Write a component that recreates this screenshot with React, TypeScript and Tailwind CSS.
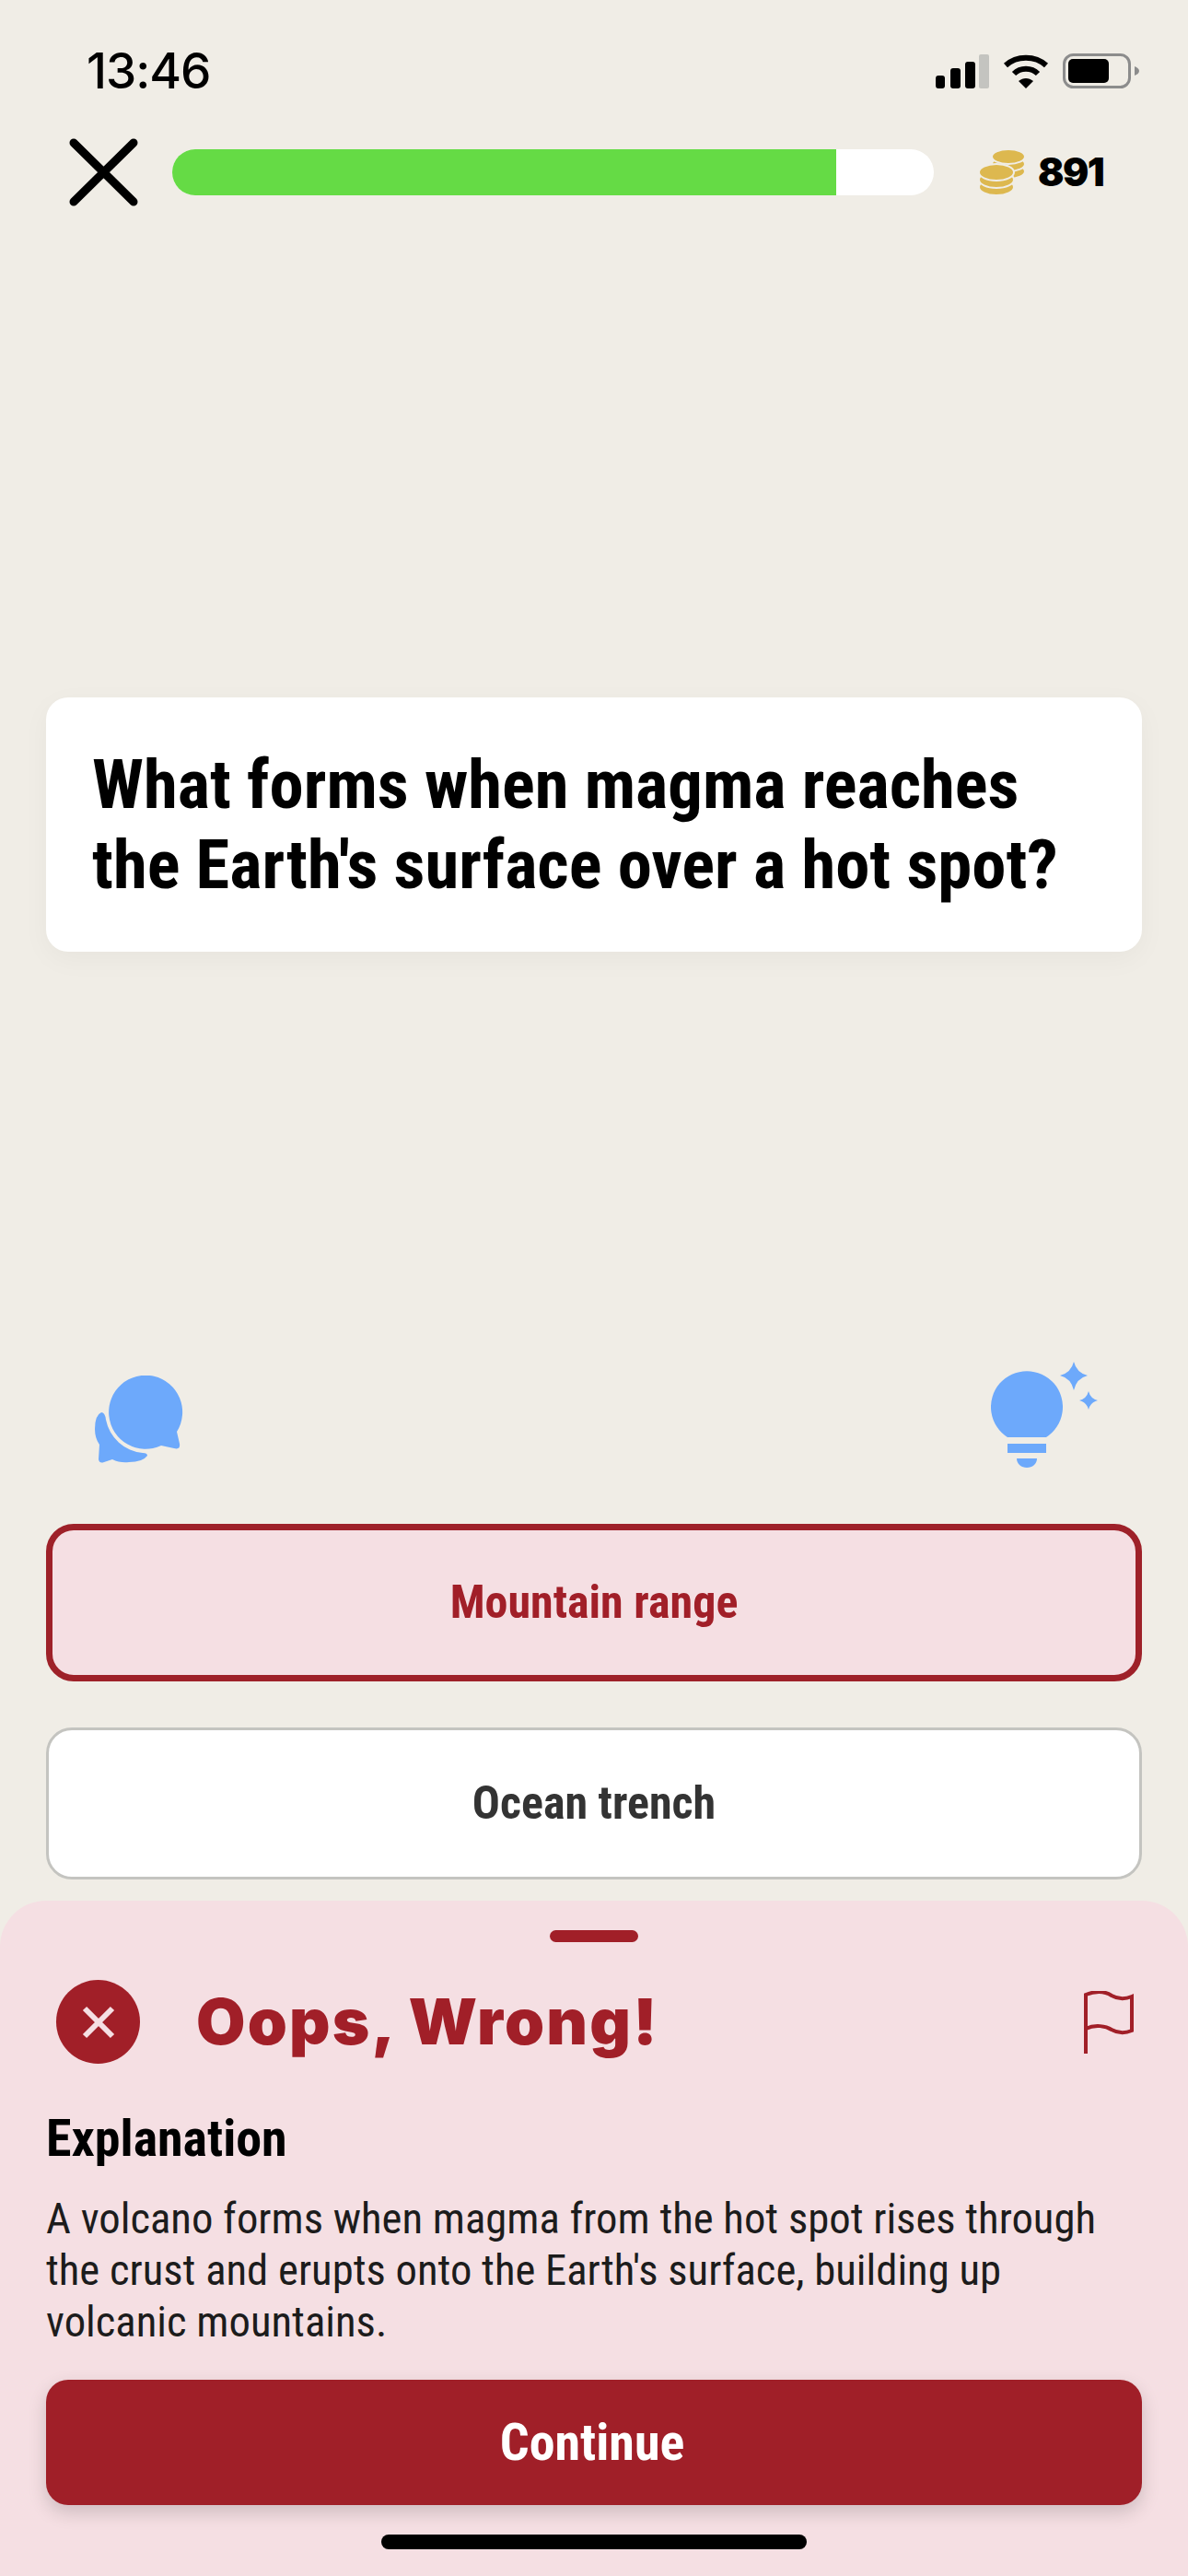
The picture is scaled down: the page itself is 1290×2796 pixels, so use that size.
import React from 'react';

const condensed = "font-['Roboto','Liberation_Sans_Narrow',sans-serif] [font-stretch:75%]";

const SignalIcon = () => (
  <svg width="60" height="38" viewBox="0 0 60 38" className="block">
    <rect x="2" y="24" width="10" height="14" rx="3" fill="#000" />
    <rect x="18" y="16" width="11" height="22" rx="3" fill="#000" />
    <rect x="34" y="9" width="11" height="29" rx="3" fill="#000" />
    <rect x="49" y="1" width="11" height="37" rx="2" fill="#c4c4c0" />
  </svg>
);

const WifiIcon = () => (
  <svg width="50" height="38" viewBox="0 0 50 38" className="block">
    <path d="M3 13C15 2 35 2 47 13" fill="none" stroke="#000" strokeWidth="6" />
    <path d="M12 22C19 15 31 15 38 22" fill="none" stroke="#000" strokeWidth="6" />
    <path d="M17 30C22 26 28 26 33 30L25 38Z" fill="#000" />
  </svg>
);

const BatteryIcon = () => (
  <svg width="83" height="38" viewBox="0 0 83 38" className="block">
    <rect x="1.5" y="1.5" width="71" height="35" rx="10" fill="none" stroke="#8c8c8c" strokeWidth="3" />
    <rect x="6" y="6" width="44" height="26" rx="5" fill="#000" />
    <path d="M78 14C81 15 83 17 83 19C83 21 81 23 78 24Z" fill="#8c8c8c" />
  </svg>
);

const CoinsIcon = () => {
  const bg = '#f0ede6';
  const gold = '#ddb84f';
  return (
    <svg width="52" height="50" viewBox="0 0 52 50" className="block">
      <ellipse cx="32" cy="24" rx="18" ry="8" fill={gold} stroke={bg} strokeWidth="2" />
      <ellipse cx="32" cy="16" rx="18" ry="8" fill={gold} stroke={bg} strokeWidth="2" />
      <ellipse cx="32" cy="8" rx="18" ry="8" fill={gold} stroke={bg} strokeWidth="2" />
      <ellipse cx="19" cy="41" rx="19" ry="9" fill={gold} stroke={bg} strokeWidth="2" />
      <ellipse cx="19" cy="33" rx="19" ry="9" fill={gold} stroke={bg} strokeWidth="2" />
      <ellipse cx="19" cy="25" rx="19" ry="9" fill={gold} stroke={bg} strokeWidth="2" />
    </svg>
  );
};

const ChatIcon = () => (
  <svg width="96" height="96" viewBox="23 22 96 96" className="block" fill="#6da9fb">
    <path d="M95 98A40 40 0 1 1 112 83L115 96Q116 103 109 101Z" />
    <path d="M75 106A45 45 0 0 1 35 70Q34 62 30 62Q23 65 23 80Q23 90 28 97L27 113Q28 118 33 116L42 113Q50 117 60 116Q75 116 80 109Q80 106 75 106Z" />
  </svg>
);

const BulbIcon = () => (
  <svg width="117" height="116" viewBox="27 18 117 116" className="block" fill="#6da9fb">
    <path d="M45 100A39 39 0 1 1 87 100Z" />
    <rect x="45" y="107" width="42" height="10" />
    <path d="M55 123H77C77 129 72 133 66 133C60 133 55 129 55 123Z" />
    <path d="M117 18Q120 30 132 33Q120 36 117 49Q114 36 102 33Q114 30 117 18Z" />
    <path d="M133 50Q135 58 143 60Q135 62 133 70Q131 62 123 60Q131 58 133 50Z" />
  </svg>
);

const FlagIcon = () => (
  <svg width="58" height="68" viewBox="0 0 58 68" className="block" fill="none" stroke="#a11f28" strokeWidth="4">
    <path d="M5 68V4C18 -1 27 1 33 5C40 9 48 9 55 6V43C48 46 40 46 33 42C27 38 15 36 5 41" />
  </svg>
);

export default function App() {
  return (
    <div className="relative w-[1290px] h-[2796px] overflow-hidden bg-[#f0ede6] text-black">
      {/* status bar */}
      <div className="flex items-center justify-between h-[38px] pl-[94px] pr-[53px] pt-[58px] box-content">
        <span className="font-['Inter',sans-serif] font-medium text-[53px] leading-[38px] tracking-[-1px]">13:46</span>
        <div className="flex items-center gap-[15px]">
          <SignalIcon />
          <WifiIcon />
          <BatteryIcon />
        </div>
      </div>

      {/* header */}
      <div className="flex items-center h-[74px] mt-[54px] pl-[75px]">
        <svg width="75" height="74" viewBox="0 0 75 74" className="block shrink-0">
          <path d="M5 5L70 69M70 5L5 69" fill="none" stroke="#000" strokeWidth="9" strokeLinecap="round" />
        </svg>
        <div className="ml-[37px] w-[827px] h-[50px] rounded-full bg-white overflow-hidden">
          <div className="h-full w-[721px] bg-[#65db45]" />
        </div>
        <div className="ml-[49px]">
          <CoinsIcon />
        </div>
        <span className="ml-[12px] font-['Inter',sans-serif] font-black text-[42px] leading-none tracking-[-1.5px]">891</span>
      </div>

      {/* question */}
      <div className="mx-[50px] mt-[533px] h-[276px] flex items-center rounded-[24px] bg-white px-[50px] shadow-[0_8px_30px_rgba(0,0,0,0.04)]">
        <h1 className={`${condensed} font-bold text-[74.7px] leading-[87px]`}>
          What forms when magma reaches
          <br />
          the Earth's surface over a hot spot?
        </h1>
      </div>

      {/* helpers */}
      <div className="flex items-end justify-between mt-[445px] pl-[103px] pr-[97px]">
        <div className="mb-[5px]">
          <ChatIcon />
        </div>
        <BulbIcon />
      </div>

      {/* answers */}
      <div className="mx-[50px] mt-[60px] h-[171px] flex items-center justify-center rounded-[30px] border-[7px] border-[#9e2129] bg-[#f5dfe3]">
        <span className={`${condensed} font-bold text-[50px] text-[#a11f28]`}>Mountain range</span>
      </div>
      <div className="mx-[50px] mt-[50px] h-[165px] flex items-center justify-center rounded-[28px] border-[3px] border-[#c4c4c0] bg-white">
        <span className={`${condensed} font-bold text-[50px] text-[#333333]`}>Ocean trench</span>
      </div>

      {/* wrong answer sheet */}
      <div className="absolute inset-x-0 bottom-0 h-[733px] rounded-t-[50px] bg-[#f5dfe3] flex flex-col">
        <div className="mx-auto mt-[32px] h-[13px] w-[96px] rounded-full bg-[#a11f28]" />
        <div className="flex items-center h-[91px] mt-[41px] pl-[61px] pr-[58px]">
          <div className="w-[91px] h-[91px] rounded-full bg-[#a11f28] flex items-center justify-center shrink-0">
            <svg width="38" height="38" viewBox="0 0 38 38" className="block">
              <path d="M4 4L34 34M34 4L4 34" fill="none" stroke="#f5dfe3" strokeWidth="6" />
            </svg>
          </div>
          <span className="ml-[61px] font-['Inter',sans-serif] font-black text-[69px] leading-none tracking-[2.2px] text-[#a11f28] grow">Oops, Wrong!</span>
          <FlagIcon />
        </div>
        <h2 className={`${condensed} mx-[50px] mt-[48px] font-bold text-[56px] leading-[66px]`}>Explanation</h2>
        <p className={`${condensed} mx-[50px] mt-[26px] text-[46.7px] leading-[56px] text-[#1c1c1c]`}>
          A volcano forms when magma from the hot spot rises through
          <br />
          the crust and erupts onto the Earth's surface, building up
          <br />
          volcanic mountains.
        </p>
        <div className="mx-[50px] mt-[35px] h-[136px] flex items-center justify-center rounded-[24px] bg-[#a01f28] pr-[4px] shadow-[0_8px_20px_rgba(0,0,0,0.16)]">
          <span className={`${condensed} font-bold text-[56px] text-white`}>Continue</span>
        </div>
        <div className="mx-auto mt-[32px] h-[16px] w-[462px] rounded-full bg-black" />
      </div>
    </div>
  );
}
